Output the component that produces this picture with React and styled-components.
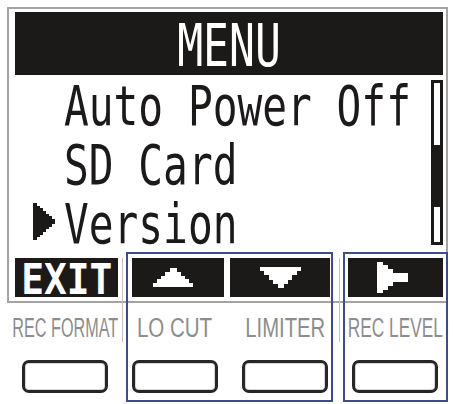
import React from 'react';
import styled, { createGlobalStyle } from 'styled-components';

const INK = '#1c1919';

const GlobalStyle = createGlobalStyle`
  html, body { margin: 0; padding: 0; background: #fff; }
  body { font-family: "Liberation Sans", Arial, sans-serif; }
`;

const Page = styled.div`
  position: relative;
  width: 453px;
  height: 404px;
  overflow: hidden;
  background: #fff;
`;

const Screen = styled.div`
  box-sizing: border-box;
  margin: 7px 0 0 7px;
  width: 441px;
  height: 296px;
  border: 2px solid #a3a3a3;
  padding: 3px 3px 4px 6px;
  display: flex;
  flex-direction: column;
`;

const TitleBar = styled.div`
  box-sizing: border-box;
  height: 63px;
  padding-top: 9px;
  background: ${INK};
  display: flex;
  justify-content: center;
`;

const TitleText = styled.span`
  display: inline-block;
  font-family: "DejaVu Sans Mono", monospace;
  font-size: 59px;
  line-height: 50px;
  height: 50px;
  color: #fff;
  transform: scaleX(0.73);
  transform-origin: center center;
`;

const MenuArea = styled.div`
  display: flex;
  height: 183px;
`;

const List = styled.ul`
  list-style: none;
  margin: 0;
  padding: 0;
  flex: 1 1 0;
  min-width: 0;
`;

const Item = styled.li`
  box-sizing: border-box;
  display: grid;
  grid-template-columns: 49px minmax(0, 1fr);
  height: 59px;
  padding-top: 3px;
`;

const CursorCell = styled.div`
  padding: 7px 0 0 18px;
`;

const ItemText = styled.span`
  display: inline-block;
  font-family: "DejaVu Sans Mono", monospace;
  font-size: 56px;
  line-height: 56px;
  color: ${INK};
  white-space: pre;
  transform: scaleX(0.735);
  transform-origin: left center;
`;

const ScrollTrack = styled.div`
  box-sizing: border-box;
  width: 12px;
  height: 165px;
  margin-top: 5px;
  border: 3px solid ${INK};
`;

const ScrollThumb = styled.div`
  margin-top: 62px;
  height: 62px;
  background: ${INK};
`;

const SoftBar = styled.div`
  display: flex;
  height: 39px;
`;

const SoftKey = styled.div`
  width: ${p => p.$w}px;
  margin-left: ${p => p.$ml || 0}px;
  background: ${INK};
  display: flex;
  align-items: center;
  justify-content: center;
`;

const KeyText = styled.span`
  display: inline-block;
  font-family: "DejaVu Sans Mono", monospace;
  font-weight: 700;
  font-size: 43px;
  line-height: 36px;
  height: 36px;
  color: #fff;
  transform: scaleX(0.88);
  transform-origin: center center;
  margin-top: 2px;
`;

const Controls = styled.div`
  display: grid;
  grid-template-columns: repeat(4, 110px);
  margin: 10px 0 0 10px;
`;

const Control = styled.div`
  display: flex;
  flex-direction: column;
  align-items: center;
`;

const ControlLabel = styled.span`
  display: inline-block;
  font-family: "Liberation Sans", Arial, sans-serif;
  font-size: 27px;
  line-height: 30px;
  color: #8d8d8d;
  white-space: nowrap;
  transform: scaleX(${p => p.$sx});
  transform-origin: center center;
`;

const HardButton = styled.div`
  box-sizing: border-box;
  width: 86px;
  height: 33px;
  margin-top: 17px;
  border: 3px solid #262626;
  border-radius: 7px;
  background: #fff;
  box-shadow: inset 0 0 0 1px #d8d8d8;
`;

const Highlight = styled.div`
  position: absolute;
  top: 252px;
  left: ${p => p.$left}px;
  width: ${p => p.$w}px;
  height: 150px;
  box-sizing: border-box;
  border: 2px solid #3c4c8e;
  pointer-events: none;

  &::before {
    content: '';
    position: absolute;
    left: -6px;
    top: 4px;
    width: 1px;
    height: 84px;
    background: #c2c2c2;
  }
`;

const Glyph = styled.svg`
  display: block;
  shape-rendering: crispEdges;
  margin-right: ${p => p.$nudge || 0}px;
`;

function stepsUp(w, h, n, tip) {
  const rh = h / n;
  let d = '';
  for (let i = 0; i < n; i++) {
    const rw = tip + ((w - tip) * i) / (n - 1);
    const x = (w - rw) / 2;
    d += `M${x.toFixed(2)} ${(i * rh).toFixed(2)}h${rw.toFixed(2)}v${(rh + 0.4).toFixed(2)}h${(-rw).toFixed(2)}z`;
  }
  return d;
}

function stepsRight(w, h, n, tip) {
  const cw = w / n;
  let d = '';
  for (let i = 0; i < n; i++) {
    const ch = h - ((h - tip) * i) / (n - 1);
    const y = (h - ch) / 2;
    d += `M${(i * cw).toFixed(2)} ${y.toFixed(2)}h${(cw + 0.4).toFixed(2)}v${ch.toFixed(2)}h${(-(cw + 0.4)).toFixed(2)}z`;
  }
  return d;
}

const Cursor = () => (
  <Glyph width="22" height="37" viewBox="0 0 22 37">
    <path d={stepsRight(22, 37, 7, 5)} fill={INK} />
  </Glyph>
);

const UpArrow = () => (
  <Glyph width="40" height="19" viewBox="0 0 40 19" $nudge={10}>
    <path d={stepsUp(40, 19, 5, 7)} fill="#fff" />
  </Glyph>
);

const DownArrow = () => (
  <Glyph width="41" height="21" viewBox="0 0 41 21">
    <g transform="translate(0 21) scale(1 -1)">
      <path d={stepsUp(41, 21, 5, 6)} fill="#fff" />
    </g>
  </Glyph>
);

const RightArrow = () => (
  <Glyph width="31" height="31" viewBox="0 0 31 31" $nudge={6}>
    <path
      d="M0 0h6v31h-6z M6 3h5v25h-5z M11 7h5v17h-5z M16 11h15v9h-15z"
      fill="#fff"
    />
  </Glyph>
);

const items = [
  { label: 'Auto Power Off', active: false },
  { label: 'SD Card', active: false },
  { label: 'Version', active: true },
];

const controls = [
  { label: 'REC FORMAT', sx: 0.6 },
  { label: 'LO CUT', sx: 0.76 },
  { label: 'LIMITER', sx: 0.75 },
  { label: 'REC LEVEL', sx: 0.64 },
];

export default function App() {
  return (
    <Page>
      <GlobalStyle />
      <Screen>
        <TitleBar>
          <TitleText>MENU</TitleText>
        </TitleBar>
        <MenuArea>
          <List>
            {items.map(it => (
              <Item key={it.label}>
                <CursorCell>{it.active && <Cursor />}</CursorCell>
                <div>
                  <ItemText>{it.label}</ItemText>
                </div>
              </Item>
            ))}
          </List>
          <ScrollTrack>
            <ScrollThumb />
          </ScrollTrack>
        </MenuArea>
        <SoftBar>
          <SoftKey $w={103}>
            <KeyText>EXIT</KeyText>
          </SoftKey>
          <SoftKey $w={92} $ml={14}>
            <UpArrow />
          </SoftKey>
          <SoftKey $w={100} $ml={6}>
            <DownArrow />
          </SoftKey>
          <SoftKey $w={95} $ml={18}>
            <RightArrow />
          </SoftKey>
        </SoftBar>
      </Screen>
      <Controls>
        {controls.map(c => (
          <Control key={c.label}>
            <ControlLabel $sx={c.sx}>{c.label}</ControlLabel>
            <HardButton />
          </Control>
        ))}
      </Controls>
      <Highlight $left={126} $w={207} />
      <Highlight $left={343} $w={105} />
    </Page>
  );
}
